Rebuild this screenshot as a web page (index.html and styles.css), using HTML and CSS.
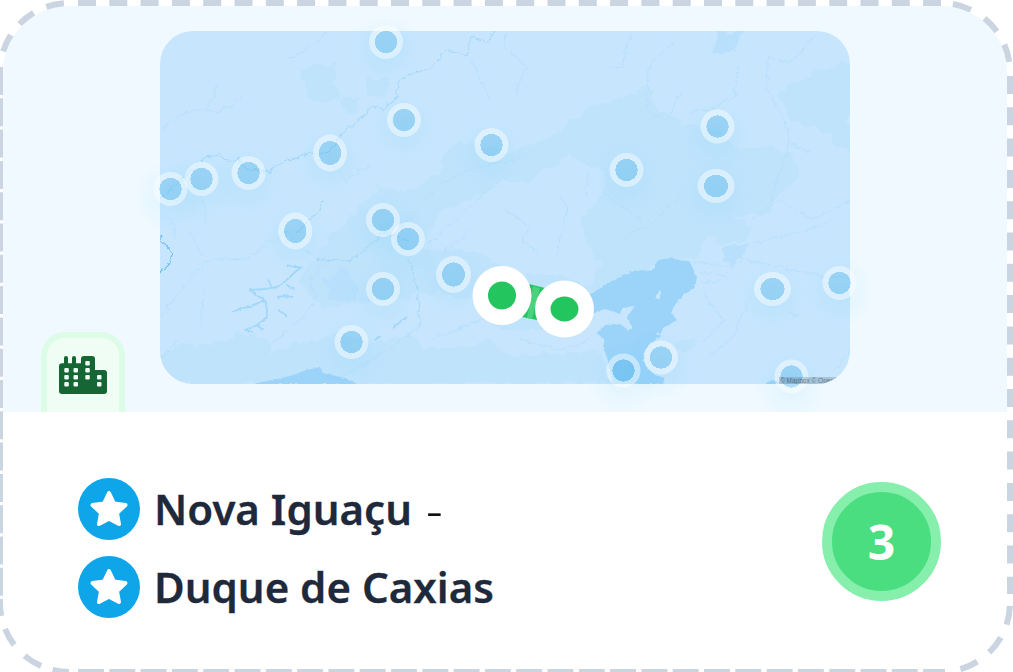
FILE: index.html
```html
<!DOCTYPE html>
<html lang="pt">
<head>
<meta charset="utf-8">
<title>Nova Iguaçu - Duque de Caxias</title>
<link rel="stylesheet" href="styles.css">
</head>
<body>
<main class="card">
  <div class="card-inner">
    <section class="hero">
      <div class="map">
        <svg class="map-svg" width="690" height="353" viewBox="160 31 690 353" aria-hidden="true">
          <defs>
            <clipPath id="mapClip"><rect x="160" y="31" width="690" height="353" rx="33"/></clipPath>
            <filter id="roughLand" x="-5%" y="-5%" width="110%" height="110%" color-interpolation-filters="sRGB">
              <feTurbulence type="fractalNoise" baseFrequency="0.08" numOctaves="4" seed="4" result="n"/>
              <feDisplacementMap in="SourceGraphic" in2="n" scale="13" xChannelSelector="R" yChannelSelector="G"/>
              <feGaussianBlur stdDeviation=".5"/>
            </filter>
            <filter id="roughRiver" x="-5%" y="-5%" width="110%" height="110%" color-interpolation-filters="sRGB">
              <feTurbulence type="fractalNoise" baseFrequency="0.14" numOctaves="3" seed="9" result="n"/>
              <feDisplacementMap in="SourceGraphic" in2="n" scale="7" xChannelSelector="R" yChannelSelector="G"/>
            </filter>
            <filter id="roughLake" x="-5%" y="-5%" width="110%" height="110%" color-interpolation-filters="sRGB">
              <feTurbulence type="fractalNoise" baseFrequency="0.3" numOctaves="2" seed="2" result="n"/>
              <feDisplacementMap in="SourceGraphic" in2="n" scale="3" xChannelSelector="R" yChannelSelector="G"/>
            </filter>
            <radialGradient id="glow">
              <stop offset="0" stop-color="#38bdf8" stop-opacity=".09"/>
              <stop offset="1" stop-color="#38bdf8" stop-opacity="0"/>
            </radialGradient>
            <radialGradient id="pinFill">
              <stop offset=".645" stop-color="#31a3df" stop-opacity=".27"/>
              <stop offset=".655" stop-color="#fff" stop-opacity=".46"/>
              <stop offset="1" stop-color="#fff" stop-opacity=".46"/>
            </radialGradient>
          </defs>
          <g clip-path="url(#mapClip)">
            <rect class="land-base" x="160" y="31" width="690" height="353"/>
            <g filter="url(#roughLand)">
              <path class="land-a" d="M330 235L353 215L380 185L395 192L417 187L443 172L443 152L463 142L490 147L510 153L563 132L583 108L603 105L620 96L650 87L657 110L690 125L720 130L740 150L770 145L790 155L800 175L775 200L770 215L745 215L720 225L695 258L660 262L630 275L600 300L560 330L500 330L420 300L380 300L320 310L300 280L320 250Z"/>
              <path class="land-base" d="M440 215L503 180L530 180L570 155L600 172L605 192L580 218L585 240L600 262L590 285L560 275L520 275L470 250L420 250Z"/>
              <path class="land-base" d="M345 325L395 300L430 290L470 300L500 320L470 345L400 350L350 345Z"/>
              <path class="land-a" d="M160 384L160 357L183 343L213 347L237 333L267 340L270 353L310 340L345 335L400 352L470 345L520 355L600 350L610 384Z"/>
              <path class="land-b" d="M323 277L345 270L360 285L355 300L330 300Z"/>
              <path class="land-a" d="M340 95L360 97L360 113L342 113Z"/>
              <path class="land-a" d="M365 80L388 77L388 95L368 97Z"/>
              <path class="land-a" d="M300 70L335 63L338 100L315 103L302 85Z"/>
              <path class="land-b" d="M715 31L745 31L735 50L712 55Z"/>
              <path class="land-a" d="M780 90L820 70L850 63L850 153L820 130L790 120Z"/>
              <path class="land-a" d="M650 87L615 100L600 108L640 120L650 105Z"/>
              <path class="land-a" d="M640 170L680 150L715 165L735 195L720 220L680 225L650 205Z"/>
              <path class="land-b" d="M720 248L750 243L740 257L728 270Z"/>
              <path class="land-a" d="M707 222L747 220L748 240L720 245Z"/>
              <path class="land-a" d="M370 345L410 335L425 345L405 365L380 362Z"/>
              <path class="land-a" d="M455 350L490 340L505 355L480 372L450 370Z"/>
              <path class="land-a" d="M677 343L697 337L695 350L680 354Z"/>
            </g>
            <g filter="url(#roughLake)">
              <path class="water" d="M585 298L593 293L610 282L623 275L637 270L652 271L658 260L670 258L690 262L697 277L695 287L680 298L675 305L671 313L677 320L663 328L660 337L652 342L645 350L643 360L647 368L655 375L665 378L663 384L613 384L608 360L603 347L605 340L597 333L605 325L620 324L628 330L632 328L627 317L635 306L622 308L620 314L605 309L593 313L585 316Z"/>
              <path class="water" d="M253 384L290 376L307 370L320 367L323 373L345 378L357 384Z"/>
              <path class="water" d="M765 384L772 380L785 384Z"/>
              <path class="land-base" d="M655 298L660 290L660 299ZM656 333L659 331L659 335ZM646 360L652 352L650 362Z"/>
            </g>
            <g class="rivers" filter="url(#roughRiver)">
              <path d="M160 132L180 115L203 108L220 112L242 97M208 107L218 85M287 60L303 52L323 37L325 31"/>
              <path d="M160 317L183 288L207 260L247 258L267 243L287 232L300 247L317 258"/>
              <path d="M203 200L205 223M170 217L178 243M203 258L190 232M160 360L178 340M270 345L300 320L317 300L310 280L330 258"/>
              <path d="M363 252L407 222L427 198L443 182L477 167L527 157M427 245L490 188L507 178M330 160L345 180L370 165"/>
              <path d="M443 253L470 230M503 45L527 68L517 85L518 95M507 33L503 45"/>
              <path d="M507 212L530 225L523 242L537 252M560 195L567 208L557 255M585 195L590 170"/>
              <path d="M630 33L623 67L610 68M673 43L648 67L647 110L667 120M680 93L667 120"/>
              <path d="M737 67L735 97L710 110L687 113M768 57L767 90L783 117L790 143L770 203M790 143L810 153M817 33L790 63L768 57"/>
              <path d="M850 200L813 220L780 200L753 217L750 230M743 260L760 263L793 270L823 277L850 277M750 250L727 273M753 243L807 230L833 220"/>
              <path d="M747 303L733 337L710 357M790 313L800 315M703 293L723 320L703 343M693 262L730 267M700 272L725 275L730 282M700 283L720 280M835 370L850 352"/>
              <path d="M420 327L383 353L343 377M430 340L480 320L520 310M520 340L560 350L590 340M620 240L650 225L680 195M640 220L600 190M470 60L490 100M200 330L205 290"/>
            </g>
            <g class="rivers-strong" filter="url(#roughRiver)">
              <path d="M160 198L175 185L190 172L205 157L220 155L228 163L238 158L245 168L270 172L285 160L305 155L330 152L345 130L363 118L373 105L383 110L397 97L398 82L410 75L430 68L447 50L467 55L470 37L487 42L495 31"/>
              <path d="M323 200L318 212L307 222L297 233M317 258L350 262L367 247L383 233L410 240"/>
              <path d="M408 257L417 287L420 327"/>
            </g>
            <g class="river-blue" filter="url(#roughRiver)">
              <path d="M160 232L162 242L172 253L170 263L160 272"/>
            </g>
            <g class="reservoir" filter="url(#roughLake)">
              <path d="M233 312L242 308L250 307L258 303L265 300L258 296L250 290L264 289L277 287L284 282L290 277L296 271L302 267L294 267L287 265M271 286L268 279M277 297L285 296L293 297M285 284L294 289M278 310L283 313L287 317M265 300L267 309L267 317L262 321L257 325L251 328L245 330L253 332M257 325L263 330M393 328L400 322L407 317M375 340L380 336"/>
            </g>
          </g>
          <g class="glows">
            <circle cx="386" cy="50" r="38"/><circle cx="404" cy="128" r="38"/><circle cx="491" cy="153" r="38"/><circle cx="330" cy="161" r="38"/><circle cx="201" cy="187" r="38"/><circle cx="170" cy="197" r="38"/><circle cx="248" cy="181" r="38"/><circle cx="295" cy="239" r="38"/><circle cx="383" cy="228" r="38"/><circle cx="407" cy="247" r="38"/><circle cx="626" cy="178" r="38"/><circle cx="717" cy="134" r="38"/><circle cx="715" cy="194" r="38"/><circle cx="453" cy="282" r="38"/><circle cx="382" cy="297" r="38"/><circle cx="351" cy="350" r="38"/><circle cx="623" cy="379" r="38"/><circle cx="660" cy="365" r="38"/><circle cx="772" cy="297" r="38"/><circle cx="839" cy="291" r="38"/><circle cx="791" cy="385" r="38"/>
          </g>
          <g class="pins">
            <ellipse cx="386" cy="42" rx="17" ry="17"/><ellipse cx="404" cy="120" rx="17" ry="17"/><ellipse cx="491.500" cy="145" rx="17" ry="17"/><ellipse cx="330" cy="153" rx="17" ry="18.500"/><ellipse cx="201.500" cy="179" rx="17" ry="17"/><ellipse cx="170.500" cy="189" rx="17" ry="17"/><ellipse cx="248.500" cy="173" rx="17" ry="17"/><ellipse cx="295.300" cy="231" rx="17" ry="18.500"/><ellipse cx="383" cy="220" rx="17" ry="17"/><ellipse cx="408" cy="239" rx="17" ry="17"/><ellipse cx="626.500" cy="170" rx="17" ry="17"/><ellipse cx="717.500" cy="126.500" rx="17" ry="17"/><ellipse cx="716" cy="186" rx="18.500" ry="17"/><ellipse cx="453.500" cy="274.500" rx="17.500" ry="18.500"/><ellipse cx="383" cy="289" rx="17" ry="17"/><ellipse cx="351.500" cy="342" rx="17" ry="17"/><ellipse cx="623.500" cy="370.500" rx="17" ry="17"/><ellipse cx="661" cy="357.500" rx="17" ry="17"/><ellipse cx="772.500" cy="289" rx="18.500" ry="17"/><ellipse cx="839.500" cy="283" rx="17" ry="17"/><ellipse cx="791.500" cy="376.500" rx="17" ry="17"/>
          </g>
          <path class="route" d="M529 284L545 288L537 320L522 317Z"/>
          <path class="route-mid" d="M533 286L540 288L532 319L527 318Z"/>
          <ellipse class="hero-ring" cx="502" cy="295.500" rx="29.500" ry="29.500"/>
          <ellipse class="hero-dot" cx="502" cy="295.500" rx="14" ry="14"/>
          <ellipse class="hero-ring" cx="564.500" cy="309" rx="29.500" ry="28.500"/>
          <ellipse class="hero-dot" cx="564.500" cy="309" rx="14" ry="12.500"/>
          <g clip-path="url(#mapClip)">
            <rect class="attr-bar" x="779" y="377" width="71" height="7"/>
            <text class="attr-text" x="780" y="383">© Mapbox © OpenStreetMap</text>
          </g>
        </svg>
      </div>
      <div class="tab">
        <svg class="tab-icon" width="48" height="38" viewBox="59 356 48 38" aria-hidden="true">
          <path class="tab-shape" d="M64 363.200V358a2 2 0 0 1 4 0V363.200H72V358a2 2 0 0 1 4 0V363.200H81V359a3 3 0 0 1 3-3H92a3 3 0 0 1 3 3V370H104a3 3 0 0 1 3 3V391a3 3 0 0 1-3 3H62a3 3 0 0 1-3-3V366a3 3 0 0 1 3-2.800Z"/>
          <g class="tab-windows">
            <rect x="64.300" y="368" width="4.500" height="4.500" rx="1"/><rect x="73.500" y="368" width="4.500" height="4.500" rx="1"/>
            <rect x="64.300" y="375" width="4.500" height="4.500" rx="1"/><rect x="73.500" y="375" width="4.500" height="4.500" rx="1"/>
            <rect x="64.300" y="382" width="4.500" height="4.500" rx="1"/><rect x="73.500" y="382" width="4.500" height="4.500" rx="1"/>
            <rect x="85.300" y="361" width="4.500" height="4.500" rx="1"/><rect x="85.300" y="368" width="4.500" height="4.500" rx="1"/><rect x="85.300" y="375" width="4.500" height="4.500" rx="1"/>
            <rect x="97" y="375" width="4.500" height="4.500" rx="1"/><rect x="97" y="382" width="4.500" height="4.500" rx="1"/>
          </g>
        </svg>
      </div>
    </section>
    <section class="details">
      <div class="names">
        <div class="name-row">
          <span class="star-disc">
            <svg width="62" height="62" viewBox="-31 -31 62 62" aria-hidden="true"><path class="star" d="M0 -16L5 -5.500L16.500 -4L8 4L10 15L0 9.800L-10 15L-8 4L-16.500 -4L-5 -5.500Z"/></svg>
          </span>
          <span class="name">Nova Iguaçu</span>
          <span class="sep">-</span>
        </div>
        <div class="name-row">
          <span class="star-disc">
            <svg width="62" height="62" viewBox="-31 -31 62 62" aria-hidden="true"><path class="star" d="M0 -16L5 -5.500L16.500 -4L8 4L10 15L0 9.800L-10 15L-8 4L-16.500 -4L-5 -5.500Z"/></svg>
          </span>
          <span class="name">Duque de Caxias</span>
        </div>
      </div>
      <div class="count">3</div>
    </section>
  </div>
  <svg class="dashes" width="1016" height="675" viewBox="-3 0 1016 675" aria-hidden="true">
    <path class="dash-top" d="M78 3H941"/>
    <path class="dash-right" d="M1010 76V594"/>
    <path class="dash-bottom" d="M78 672H945"/>
    <path class="dash-left" d="M0 67V603"/>
    <path class="dash-tl" d="M0 72A69 69 0 0 1 69 3"/>
    <path class="dash-tr" d="M941 3A69 69 0 0 1 1010 72"/>
    <path class="dash-br" d="M1010 603A69 69 0 0 1 941 672"/>
    <path class="dash-bl" d="M0 603A69 69 0 0 0 69 672"/>
  </svg>
</main>
</body>
</html>
```
FILE: styles.css
```css
html, body {
  margin: 0;
  height: 100%;
  background: #fff;
  overflow: hidden;
}

.card {
  position: relative;
  box-sizing: border-box;
  width: 1016px;
  height: 675px;
  margin-left: -3px;
  padding: 6px;
  font-family: "Noto Sans", "Open Sans", sans-serif;
}

.card-inner {
  height: 100%;
  border-radius: 66px;
  overflow: hidden;
  background: #fff;
  display: flex;
  flex-direction: column;
}

.dashes {
  position: absolute;
  left: 0;
  top: 0;
  pointer-events: none;
}
.dashes path {
  fill: none;
  stroke: #cbd5e1;
  stroke-width: 6;
}
.dash-top, .dash-right { stroke-dasharray: 18 13.3; }
.dash-bottom { stroke-dasharray: 26 5.3; }
.dash-left { stroke-dasharray: 28 3.3; }
.dash-tl { stroke-dasharray: 0 21 18 14 18 14 18 30; }
.dash-tr { stroke-dasharray: 0 12 19 16 18 15 18 30; }
.dash-br { stroke-dasharray: 0 3 19 14 19 15 18.5 40; }
.dash-bl { stroke-dasharray: 13 13.5 18.5 15 19.5 12 20 10; }

/* Hero */
.hero {
  position: relative;
  flex: none;
  height: 406px;
  box-sizing: border-box;
  padding: 25px 0 0 157px;
  background: #f0f9ff;
  overflow: hidden;
}
.map {
  width: 690px;
  height: 353px;
}
.map-svg {
  display: block;
  overflow: visible;
}

.land-base { fill: #c7e6fd; }
.land-a { fill: #c0e3fc; }
.land-b { fill: #b8e0fc; }
.water { fill: #9bd3f9; }
.rivers, .rivers-strong, .river-blue, .reservoir {
  fill: none;
  stroke-linejoin: round;
}
.rivers { stroke: #b0dcfa; stroke-width: .7; }
.rivers-strong { stroke: #9dd4f8; stroke-width: .9; }
.river-blue { stroke: #74c2f5; stroke-width: 1.3; }
.reservoir { stroke: #a0d7fa; stroke-width: 1.8; }

.glows circle { fill: url(#glow); }
.pins ellipse { fill: url(#pinFill); }

.route { fill: #22c55e; }
.route-mid { fill: #4ad27e; }
.hero-ring { fill: #fff; }
.hero-dot { fill: #22c55e; }

.attr-bar { fill: rgba(90, 110, 130, .28); }
.attr-text {
  font-family: "Liberation Sans", sans-serif;
  font-size: 6.500px;
  fill: rgba(50, 60, 70, .6);
}

/* Tab */
.tab {
  position: absolute;
  left: 38px;
  bottom: 0;
  box-sizing: border-box;
  width: 84px;
  height: 80px;
  padding: 18px 0 0 12px;
  background: #f0fdf4;
  border: 6px solid #dcfce7;
  border-bottom: 0;
  border-radius: 24px 24px 0 0;
}
.tab-icon { display: block; }
.tab-shape { fill: #166534; }
.tab-windows rect { fill: #f0fdf4; }

/* Details */
.details {
  flex: 1;
  display: flex;
  justify-content: space-between;
  align-items: flex-start;
  padding: 66px 66px 0 75px;
}
.names {
  display: flex;
  flex-direction: column;
  gap: 16px;
}
.name-row {
  display: flex;
  align-items: center;
  gap: 14px;
  height: 62px;
}
.star-disc {
  flex: none;
  width: 62px;
  height: 62px;
  border-radius: 50%;
  background: #0ea5e9;
}
.star-disc svg { display: block; }
.star {
  fill: #fff;
  stroke: #fff;
  stroke-width: 4;
  stroke-linejoin: round;
}
.name {
  font-size: 42px;
  font-weight: 600;
  line-height: 62px;
  color: #1e293b;
  white-space: nowrap;
  -webkit-text-stroke: .3px #1e293b;
}
.sep {
  font-size: 52px;
  font-weight: 300;
  line-height: 62px;
  color: #111;
}
.count {
  flex: none;
  box-sizing: border-box;
  width: 119px;
  height: 119px;
  margin-top: 4px;
  border: 10px solid #86efac;
  border-radius: 50%;
  background: #4ade80;
  color: #fff;
  font-size: 48px;
  font-weight: 700;
  display: flex;
  align-items: center;
  justify-content: center;
}
```
